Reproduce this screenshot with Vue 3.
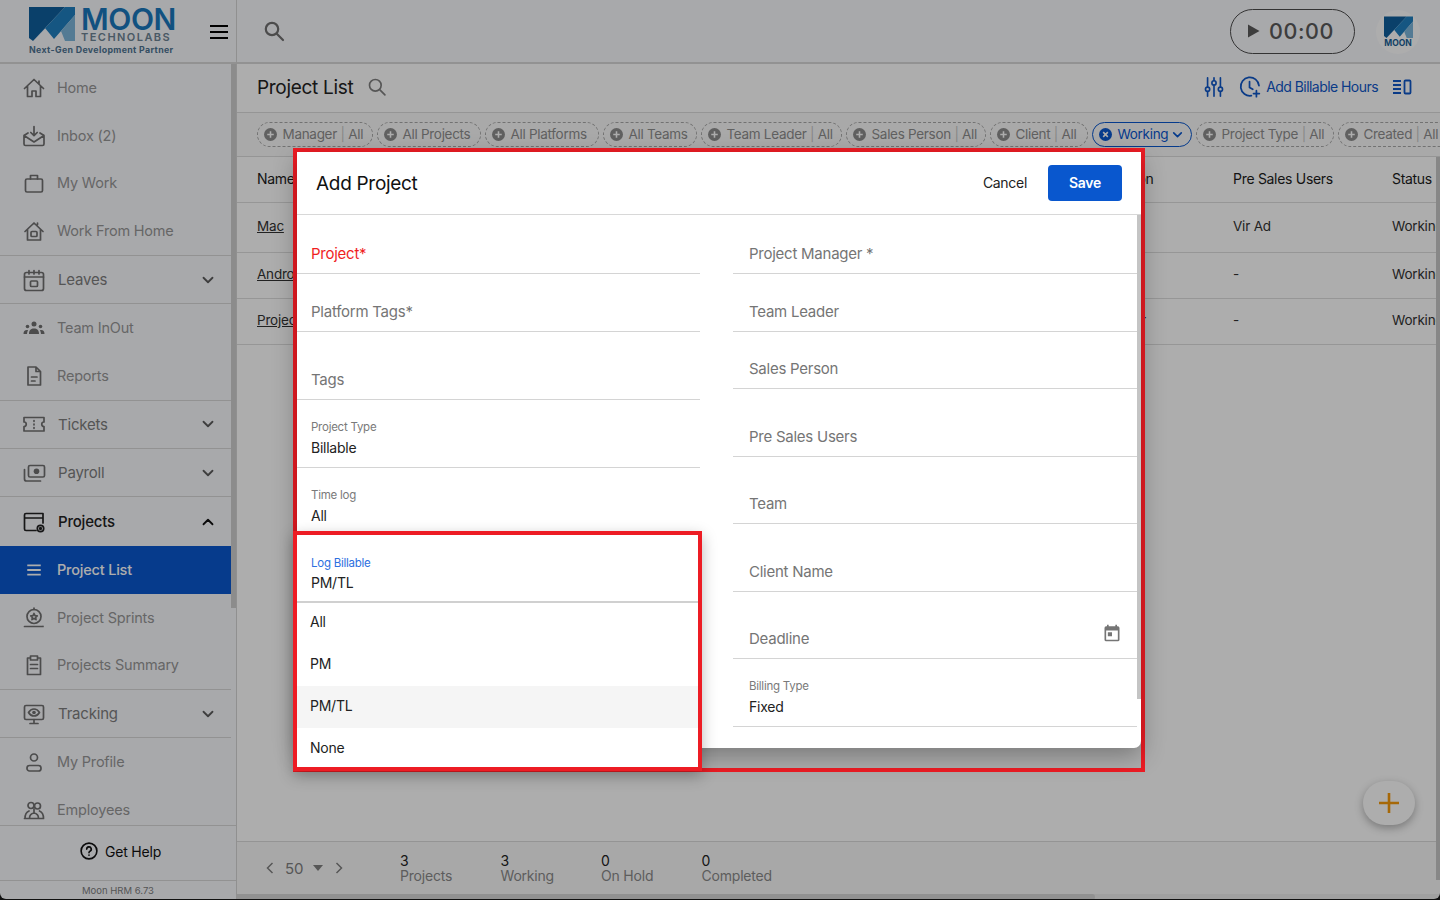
<script setup>
const s = 'fill="none" stroke="currentColor" stroke-width="1.7" stroke-linecap="round" stroke-linejoin="round"'
const icons = {
  home: `<g ${s}><path d="M2.5 12.5 12 3.5l9.5 9M5.5 10v10.5h4.5V15h4v5.5h4.500V10M17 5v3"/></g>`,
  inbox: `<g ${s}><path d="M2 11.5 12 18l10-6.500M2 11.500l4-2.500M22 11.500l-4-2.500M2 11.500V20a1.500 1.500 0 0 0 1.500 1.500h17A1.500 1.500 0 0 0 22 20v-8.500M12 2.500v9M8.800 8.500l3.200 3.200 3.200-3.200"/></g>`,
  work: `<g ${s}><rect x="3.500" y="8" width="17" height="13" rx="1.500"/><path d="M8.500 8V4.500h7V8"/></g>`,
  wfh: `<g ${s}><path d="M3 12.500 12 4l9 8.500M5.500 10.500V21h13V10.500M15.500 5.500V4"/><rect x="9" y="12.500" width="6" height="5" rx="1"/></g>`,
  leaves: `<g ${s}><rect x="2.500" y="4.500" width="19" height="18" rx="2"/><path d="M2.500 9h19M7 2.500V6M12 2.500V6M17 2.500V6"/><rect x="8.500" y="13" width="7" height="5.500" rx="1"/></g>`,
  team: `<g fill="currentColor"><circle cx="12" cy="8" r="2.500"/><circle cx="5.500" cy="10.500" r="1.800"/><circle cx="18.500" cy="10.500" r="1.800"/><path d="M7 18c0-4 2-5.500 5-5.500s5 1.500 5 5.500zM1.500 18c0-2.500 1-4 3.500-4 .7 0 1 .2 1 .2-.6 1-.9 2.300-1 3.800zM22.500 18c0-2.500-1-4-3.500-4-.7 0-1 .2-1 .2.600 1 .9 2.300 1 3.800z"/></g>`,
  reports: `<g ${s}><path d="M6 3h8l4.500 4.500V21H6zM9.500 13h5.500M9.500 17h3.500M14 3v4.500h4.500"/></g>`,
  ticket: `<g ${s}><path d="M2 5.500h20V10a2.200 2.200 0 0 0 0 4.500v4.500H2v-4.500A2.200 2.200 0 0 0 2 10zM12 8.500v.8M12 12v.8M12 15.500v.8"/></g>`,
  payroll: `<g ${s}><rect x="6.500" y="4.500" width="16" height="11.500" rx="1.500"/><path d="M2.500 8.500V18a2 2 0 0 0 2 2h14"/></g><circle cx="14.500" cy="10.200" r="2.800" fill="currentColor"/>`,
  projects: `<g ${s}><path d="M14 20.500H4a1.500 1.500 0 0 1-1.500-1.500V5A1.500 1.500 0 0 1 4 3.500h17V13M2.500 8h18.500"/><circle cx="18.500" cy="18.500" r="3.200"/><circle cx="18.500" cy="18.500" r=".8"/></g>`,
  lines: `<g fill="none" stroke="currentColor" stroke-width="2"><path d="M4.500 6.800h15M4.500 12h15M4.500 17.200h15"/></g>`,
  sprints: `<g ${s}><circle cx="12" cy="10.500" r="7"/><path d="M12 3.500V2M2.500 20.500H21M21 20.500v-.1"/><path d="m12 7.500 1 2.100 2.200.3-1.600 1.500.4 2.200-2-1-2 1 .4-2.200-1.600-1.500 2.200-.3z"/></g>`,
  summary: `<g ${s}><path d="M8.500 5H5.500v16.500h13V5h-3M8.500 3h7v4h-7zM8.500 11.500h7M8.500 15.500h7"/></g>`,
  tracking: `<g ${s}><rect x="2.500" y="3.500" width="19" height="14" rx="1.500"/><path d="M12 17.500v3.500M8 21.500h8M6.500 10.500c1.500-2.500 3.500-3.500 5.500-3.500s4 1 5.500 3.500c-1.500 2.500-3.500 3.500-5.500 3.500s-4-1-5.500-3.500z"/></g><circle cx="12" cy="10.500" r="1.800" fill="currentColor"/>`,
  profile: `<g ${s}><circle cx="12" cy="7.500" r="3.500"/><rect x="5" y="15.500" width="14" height="5.500" rx="2.500"/></g>`,
  employees: `<g ${s}><circle cx="9" cy="7.500" r="3"/><circle cx="15.500" cy="8" r="3"/><path d="M3 20.500c0-4 1.500-6.500 4-7.500M21.500 20.500c0-4-1.500-6.500-4-7.500M2.500 20.500h19M7.500 20.500c0-3 1-5 4.500-5.500 3.500.5 4.500 2.500 4.500 5.500M12 11v4"/></g>`,
}
const nav = [
  { t: 'sub', label: 'Home', icon: 'home' },
  { t: 'sub', label: 'Inbox (2)', icon: 'inbox' },
  { t: 'sub', label: 'My Work', icon: 'work' },
  { t: 'sub', label: 'Work From Home', icon: 'wfh' },
  { t: 'group', label: 'Leaves', icon: 'leaves' },
  { t: 'sub', label: 'Team InOut', icon: 'team' },
  { t: 'sub', label: 'Reports', icon: 'reports' },
  { t: 'group', label: 'Tickets', icon: 'ticket' },
  { t: 'group', label: 'Payroll', icon: 'payroll' },
  { t: 'group open', label: 'Projects', icon: 'projects' },
  { t: 'sub active', label: 'Project List', icon: 'lines' },
  { t: 'sub', label: 'Project Sprints', icon: 'sprints' },
  { t: 'sub', label: 'Projects Summary', icon: 'summary' },
  { t: 'group', label: 'Tracking', icon: 'tracking' },
  { t: 'sub', label: 'My Profile', icon: 'profile' },
  { t: 'sub', label: 'Employees', icon: 'employees' },
]
const chips = [
  { a: 'Manager', b: 'All', w: 116 }, { a: 'All Projects', w: 104 }, { a: 'All Platforms', w: 114 },
  { a: 'All Teams', w: 94 }, { a: 'Team Leader', b: 'All', w: 141 }, { a: 'Sales Person', b: 'All', w: 140 },
  { a: 'Client', b: 'All', w: 98 }, { a: 'Working', w: 100, on: true }, { a: 'Project Type', b: 'All', w: 138 },
  { a: 'Created', b: 'All', w: 130 },
]
const rows = [
  { name: 'Mac', who: '', pre: 'Vir Ad', st: 'Working', h: 50 },
  { name: 'Android', who: '', pre: '-', st: 'Working', h: 46 },
  { name: 'Project', who: 'Sr. Manager', pre: '-', st: 'Working', h: 46 },
]
const leftFields = [
  { ph: 'Project*', h: 59, err: true },
  { ph: 'Platform Tags*', h: 58 },
  { ph: 'Tags', h: 68 },
  { label: 'Project Type', val: 'Billable', h: 68 },
  { label: 'Time log', val: 'All', h: 68 },
]
const rightFields = [
  { ph: 'Project Manager *', h: 59 },
  { ph: 'Team Leader', h: 58 },
  { ph: 'Sales Person', h: 57 },
  { ph: 'Pre Sales Users', h: 68 },
  { ph: 'Team', h: 67 },
  { ph: 'Client Name', h: 68 },
  { ph: 'Deadline', h: 67, cal: true },
  { label: 'Billing Type', val: 'Fixed', h: 68 },
]
const stats = [['3', 'Projects'], ['3', 'Working'], ['0', 'On Hold'], ['0', 'Completed']]
const options = ['All', 'PM', 'PM/TL', 'None']
</script>

<template>
  <div class="page">
    <aside class="side">
      <div class="brand">
        <div class="logo">
          <div class="logo-top">
            <svg class="mark" width="46" height="35" viewBox="0 0 46 35"><polygon points="0,0 36,0 4,34 0,31" fill="#0f5f9c"/><polygon points="36,0 46,0 46,8 25,32 16,21 4,34" fill="#1f7fc0"/><polygon points="46,8 46,34 36,34 32,24" fill="#7cb6da"/></svg>
            <div class="logo-words"><span class="moon">MOON</span><span class="techno">TECHNOLABS</span></div>
          </div>
          <div class="tag">Next-Gen Development Partner</div>
        </div>
        <div class="burger"><i></i><i></i><i></i></div>
      </div>
      <div class="navwrap">
        <nav class="nav">
          <div v-for="n in nav" :key="n.label" class="item" :class="n.t">
            <svg class="ic" width="24" height="24" viewBox="0 0 24 24" v-html="icons[n.icon]"></svg>
            <span class="lbl">{{ n.label }}</span>
            <svg v-if="n.t.includes('group')" class="chev" width="18" height="18" viewBox="0 0 24 24" fill="none" stroke="currentColor" stroke-width="2.400" stroke-linecap="round" stroke-linejoin="round"><path :d="n.t.includes('open') ? 'M6 15l6-6 6 6' : 'M6 9l6 6 6-6'"/></svg>
          </div>
        </nav>
        <div class="navscroll"><div class="navthumb"></div></div>
      </div>
      <div class="help">
        <svg width="18" height="18" viewBox="0 0 24 24" fill="none" stroke="currentColor" stroke-width="2.200" stroke-linecap="round"><circle cx="12" cy="12" r="10.500"/><path d="M9 9.500a3 3 0 1 1 4.300 2.700c-.9.5-1.300 1.100-1.300 2M12 17.400v.1"/></svg>
        <span>Get Help</span>
      </div>
      <div class="ver">Moon HRM 6.73</div>
    </aside>

    <main class="main">
      <header class="top">
        <svg class="topsearch" width="24" height="24" viewBox="0 0 24 24" fill="none" stroke="currentColor" stroke-width="2.200" stroke-linecap="round"><circle cx="10" cy="10" r="6.200"/><path d="m15 15 6 6"/></svg>
        <div class="timer">
          <svg width="14" height="16" viewBox="0 0 14 16"><path d="M1 1.500v13L12.500 8z" fill="currentColor"/></svg>
          <span>00:00</span>
        </div>
        <div class="avatar">
          <svg width="29" height="23" viewBox="0 0 46 35"><polygon points="0,0 36,0 4,34 0,31" fill="#0f5f9c"/><polygon points="36,0 46,0 46,8 25,32 16,21 4,34" fill="#1f7fc0"/><polygon points="46,8 46,34 36,34 32,24" fill="#7cb6da"/></svg>
          <span>MOON</span>
        </div>
      </header>

      <div class="titlebar">
        <h1>Project List</h1>
        <svg width="20" height="20" viewBox="0 0 24 24" fill="none" stroke="#7f7f7f" stroke-width="2" stroke-linecap="round"><circle cx="10" cy="10" r="7"/><path d="m15.500 15.500 6 6"/></svg>
        <div class="actions">
          <svg width="22" height="22" viewBox="0 0 24 24" fill="none" stroke="currentColor" stroke-width="1.800" stroke-linecap="round"><path d="M5 2v10M5 17v5M12 2v3M12 10v12M19 2v10M19 17v5"/><circle cx="5" cy="14.500" r="2.300"/><circle cx="12" cy="7.500" r="2.300"/><circle cx="19" cy="14.500" r="2.300"/></svg>
          <svg class="clk" width="22" height="22" viewBox="0 0 24 24" fill="none" stroke="currentColor" stroke-width="1.900" stroke-linecap="round" stroke-linejoin="round"><path d="M13.500 21.400A10 10 0 1 1 21.800 10.500M11.500 6v6.500l3.500 2M19 16v6.500M15.800 19.200h6.400"/></svg>
          <span class="abh">Add Billable Hours</span>
          <svg class="cols" width="20" height="18" viewBox="0 0 20 18" fill="none" stroke="currentColor" stroke-width="1.800"><path d="M1 3h8M1 7h8M1 11h8M1 15h8"/><rect x="12.500" y="2.500" width="6" height="13" rx="1"/></svg>
        </div>
      </div>

      <div class="chips">
        <div v-for="c in chips" :key="c.a" class="chip" :class="{ on: c.on }" :style="{ flexBasis: c.w + 'px' }">
          <svg width="13" height="13" viewBox="0 0 14 14"><circle cx="7" cy="7" r="7" fill="currentColor"/><path v-if="!c.on" d="M7 3.500v7M3.500 7h7" stroke="#fff" stroke-width="1.700"/><path v-else d="m4.500 4.500 5 5M9.500 4.500l-5 5" stroke="#fff" stroke-width="1.700"/></svg>
          <span class="chiptxt">{{ c.a }}<template v-if="c.b"><em> | </em>{{ c.b }}</template></span>
          <svg v-if="c.on" class="chipchev" width="13" height="13" viewBox="0 0 24 24" fill="none" stroke="currentColor" stroke-width="3" stroke-linecap="round" stroke-linejoin="round"><path d="M5 9l7 7 7-7"/></svg>
        </div>
      </div>

      <div class="table">
        <div class="tr thead"><span>Name</span><span>Sales Person</span><span>Pre Sales Users</span><span>Status</span></div>
        <div v-for="r in rows" :key="r.name" class="tr body" :style="{ height: r.h + 'px' }">
          <span><a>{{ r.name }}</a></span><span>{{ r.who }}</span><span>{{ r.pre }}</span><span>{{ r.st }}</span>
        </div>
      </div>

      <div class="grow"><button class="fab"><svg width="22" height="22" viewBox="0 0 22 22"><path d="M11 1v20M1 11h20" stroke="currentColor" stroke-width="2.600"/></svg></button></div>

      <footer class="foot">
        <div class="pager">
          <svg width="12" height="14" viewBox="0 0 12 14" fill="none" stroke="currentColor" stroke-width="1.500"><path d="M8.500 2 3.500 7l5 5"/></svg>
          <span class="num">50</span>
          <svg width="10" height="6" viewBox="0 0 10 6"><path d="M0 0h10L5 6z" fill="currentColor"/></svg>
          <svg class="nx" width="12" height="14" viewBox="0 0 12 14" fill="none" stroke="currentColor" stroke-width="1.500"><path d="m3.500 2 5 5-5 5"/></svg>
        </div>
        <div class="stats">
          <div v-for="st in stats" :key="st[1]" class="stat"><b>{{ st[0] }}</b><span>{{ st[1] }}</span></div>
        </div>
      </footer>
      <div class="hscroll"><div class="hthumb"></div></div>
    </main>

    <div class="vthumb"></div>
    <div class="scrim"></div>

    <section class="frame">
      <div class="modal">
        <div class="mhead">
          <h2>Add Project</h2>
          <span class="cancel">Cancel</span>
          <button class="save">Save</button>
        </div>
        <div class="form">
          <div class="col left">
            <div v-for="f in leftFields" :key="f.ph || f.label" class="field" :style="{ height: f.h + 'px' }">
              <span v-if="f.ph" class="ph" :class="{ err: f.err }">{{ f.ph }}</span>
              <template v-else><span class="small">{{ f.label }}</span><span class="val">{{ f.val }}</span></template>
            </div>
          </div>
          <div class="col right">
            <div v-for="f in rightFields" :key="f.ph || f.label" class="field" :style="{ height: f.h + 'px' }">
              <span v-if="f.ph" class="ph">{{ f.ph }}</span>
              <template v-else><span class="small">{{ f.label }}</span><span class="val">{{ f.val }}</span></template>
              <svg v-if="f.cal" class="cal" width="20" height="20" viewBox="0 0 24 24"><path d="M19 4h-1V2h-2v2H8V2H6v2H5a2 2 0 0 0-2 2v14a2 2 0 0 0 2 2h14a2 2 0 0 0 2-2V6a2 2 0 0 0-2-2zm0 16H5V9h14zM7 11h5v5H7z" fill="#757575"/></svg>
            </div>
          </div>
          <div class="mscroll"><div class="mthumb"></div></div>
        </div>
      </div>
    </section>

    <section class="ddframe">
      <div class="field dd">
        <span class="small blue">Log Billable</span><span class="val">PM/TL</span>
      </div>
      <ul class="menu">
        <li v-for="o in options" :key="o" :class="{ hl: o === 'PM/TL' }">{{ o }}</li>
      </ul>
    </section>

    <div class="edge"></div>
  </div>
</template>

<style>
html, body { margin: 0; background: #fff; }
</style>

<style scoped>
* { box-sizing: border-box; }
.page { position: relative; width: 1440px; height: 900px; overflow: hidden; display: flex; font-family: Inter, "Noto Sans", sans-serif; font-size: 14.500px; letter-spacing: -.2px; color: #262626; background: #fff; }

.side { width: 237px; height: 900px; flex: none; display: flex; flex-direction: column; background: #f8f9fd; border-right: 1px solid #d4d4d4; }
.brand { height: 64px; flex: none; display: flex; align-items: flex-start; padding: 7px 8px 0 29px; border-bottom: 2px solid #d8d8d8; }
.logo { width: 146px; flex: none; }
.logo-top { display: flex; gap: 6px; height: 37px; }
.mark { flex: none; }
.logo-words { display: flex; flex-direction: column; flex: none; }
.moon { font-size: 30px; line-height: 24px; font-weight: 600; letter-spacing: -.4px; color: #1a78bd; height: 24px; }
.techno { font-size: 11px; line-height: 13px; font-weight: 600; letter-spacing: 1.450px; color: #6d8394; margin-top: 0; }
.tag { font-size: 8.800px; font-weight: 700; line-height: 12px; letter-spacing: .35px; white-space: nowrap; color: #4d7391; }
.burger { margin: 18px 0 0 35px; width: 18px; display: flex; flex-direction: column; gap: 4px; }
.burger i { display: block; height: 2px; background: #000; }

.navwrap { flex: 1; min-height: 0; display: flex; overflow: hidden; }
.nav { width: 231px; flex: none; }
.item { display: flex; align-items: center; padding-left: 22px; height: 47.800px; color: #979797; }
.item.group { height: 48.600px; color: #7e7e7e; border-bottom: 1px solid #d8d8d8; }
.item.sub + .item.group { height: 49px; border-top: 1px solid #d8d8d8; }
.item.group.open { color: #222; border-bottom: 0; }
.item.group.open .lbl { font-weight: 500; }
.item.active { background: #0957ce; color: #fff; font-weight: 500; }
.ic { flex: none; color: #707070; }
.item.open .ic { color: #222; }
.item.active .ic { color: #fff; transform: scale(.9); }
.lbl { margin-left: 11px; padding-bottom: 1px; white-space: nowrap; font-size: 14.500px; }
.group .lbl { margin-left: 12px; padding-bottom: 0; font-size: 15px; }
.chev { margin-left: auto; margin-right: 14px; color: #5c5c5c; }
.item.open .chev { color: #111; }
.navscroll { width: 5px; flex: none; }
.navthumb { height: 544px; background: #cfcfcf; }

.help { height: 56px; flex: none; display: flex; align-items: center; justify-content: center; gap: 7px; padding: 0 0 4px 5px; border-top: 1px solid #d8d8d8; border-bottom: 1px solid #d8d8d8; font-size: 14px; color: #111; }
.ver { height: 19px; flex: none; text-align: center; font-size: 9.500px; line-height: 19px; color: #7d7d7d; letter-spacing: 0; }

.main { flex: 1; min-width: 0; height: 900px; display: flex; flex-direction: column; }
.top { height: 64px; flex: none; display: flex; align-items: center; padding: 0 20px 0 25px; background: #f8f9fd; border-bottom: 2px solid #d8d8d8; color: #707070; }
.topsearch { margin-right: auto; }
.timer { width: 125px; height: 45px; display: flex; align-items: center; gap: 8px; padding-left: 16px; border: 1.500px solid #4c4c4c; border-radius: 23px; color: #5a5a5a; }
.timer span { font-size: 21.500px; letter-spacing: .6px; font-weight: 500; }
.avatar { width: 44px; height: 44px; margin: 2px 0 0 21px; border-radius: 50%; background: #fff; display: flex; flex-direction: column; align-items: center; justify-content: center; color: #1a5f96; }
.avatar span { font-size: 8.500px; line-height: 9px; font-weight: 700; letter-spacing: 0; }

.titlebar { height: 49px; flex: none; display: flex; align-items: center; padding: 0 28px 2px 20px; border-bottom: 1px solid #dcdcdc; background: #fff; }
h1 { margin: 0 14px 0 0; font-size: 19px; font-weight: 400; color: #222; letter-spacing: -.3px; }
.actions { margin-left: auto; display: flex; align-items: center; color: #0f57c8; }
.clk { margin-left: 14px; }
.abh { margin: 0 0 2px 5px; font-size: 14px; letter-spacing: -.55px; }
.cols { margin-left: 14px; }

.chips { height: 44px; flex: none; display: flex; align-items: center; gap: 4px; padding-left: 20px; overflow: hidden; border-bottom: 1px solid #dcdcdc; background: #fafafa; }
.chip { flex: 0 0 auto; height: 25px; display: flex; align-items: center; padding-left: 6px; border: 1px dashed #a8a8a8; border-radius: 13px; color: #8e8e8e; white-space: nowrap; font-size: 13.500px; }
.chip.on { border: 1px solid #0957ce; color: #0957ce; }
.chiptxt { margin-left: 5.500px; padding-bottom: 1px; letter-spacing: -.3px; }
.chiptxt em { font-style: normal; color: #c8c8c8; }
.chipchev { margin-left: 3px; }

.table { flex: none; }
.tr { display: grid; grid-template-columns: 814px 162px 159px 1fr; align-items: center; padding: 0 0 2px 20px; height: 46px; border-bottom: 1px solid #dedede; font-size: 13.500px; color: #333; white-space: nowrap; overflow: hidden; }
.tr.body { padding-bottom: 4px; }
.thead { height: 46px; color: #1c1c1c; font-size: 14px; letter-spacing: -.3px; background: #fff; }
.tr a { text-decoration: underline; }

.grow { flex: 1; min-height: 0; position: relative; }
.fab { position: absolute; right: 25px; top: 436px; width: 52px; height: 44px; padding: 0; border: 0; border-radius: 22px; background: #fff; color: #f59a0c; box-shadow: 0 3px 8px rgba(0,0,0,.3); display: flex; align-items: center; justify-content: center; }

.foot { height: 53px; flex: none; display: flex; align-items: center; padding-left: 27px; border-top: 1px solid #dadada; background: #f8f8f8; }
.pager { width: 136px; display: flex; align-items: center; color: #808080; }
.num { margin: 0 10px 0 9px; font-size: 15px; }
.nx { margin-left: 10px; }
.stats { display: flex; }
.stat { width: 100.500px; display: flex; flex-direction: column; font-size: 14px; line-height: 15px; color: #8a8a8a; }
.stat b { font-weight: 400; color: #222; }
.hscroll { height: 6px; flex: none; background: #ececec; }
.hthumb { width: 858px; height: 6px; background: #d6d6d6; border-radius: 0 3px 3px 0; }

.vthumb { position: absolute; right: 0; top: 157px; width: 4px; height: 723px; background: #c8c8c8; }
.scrim { position: absolute; inset: 0; background: rgba(0,0,0,.32); }

.frame { position: absolute; left: 293px; top: 148px; width: 852px; height: 624px; border: 4px solid #ed1c24; }
.modal { height: 596px; background: #fff; border-radius: 0 0 7px 7px; overflow: hidden; display: flex; flex-direction: column; box-shadow: 0 8px 24px rgba(0,0,0,.3); }
.mhead { height: 63px; flex: none; display: flex; align-items: center; padding: 0 19px; border-bottom: 1px solid #d8d8d8; }
h2 { margin: 0 auto 0 0; font-size: 19px; font-weight: 400; color: #111; letter-spacing: -.3px; }
.cancel { font-size: 14px; color: #222; margin: 0 21px 2px 0; letter-spacing: -.3px; }
.save { width: 74px; height: 36px; border: 0; padding: 0 0 2px; border-radius: 4px; background: #0957ce; color: #fff; font: 600 14px Inter, sans-serif; letter-spacing: -.3px; }
.form { flex: 1; min-height: 0; display: flex; }
.col.left { width: 403px; flex: none; }
.col.right { width: 404px; flex: none; margin-left: 33px; }
.left .field { padding-left: 14px; }
.right .field { padding-left: 16px; }
.field { position: relative; display: flex; flex-direction: column; justify-content: flex-end; padding-bottom: 9px; border-bottom: 1px solid #d4d4d4; }
.ph { font-size: 15px; line-height: 22px; margin-bottom: -1px; letter-spacing: -.25px; color: #757575; }
.ph.err { color: #f01f1f; }
.small { font-size: 11.500px; line-height: 15px; letter-spacing: -.25px; color: #7a7a7a; margin-bottom: 3px; }
.small.blue { color: #2d6fe0; }
.val { font-size: 14px; line-height: 20px; letter-spacing: -.25px; color: #222; }
.cal { position: absolute; right: 15px; top: 31px; }
.mscroll { width: 4px; flex: none; }
.mthumb { height: 484px; background: #c4c4c4; }

.ddframe { position: absolute; left: 293px; top: 531px; width: 409px; height: 240px; border: 4px solid #ed1c24; background: #fff; box-shadow: 0 5px 14px rgba(0,0,0,.28); }
.dd { height: 68px; padding-left: 14px; border-bottom: 2px solid #d0d0d0; padding-bottom: 8px; }
.dd .small { margin-bottom: 2.500px; }
.menu { list-style: none; margin: -1px 0 0; padding: 0; }
.menu li { height: 42px; line-height: 40px; padding-left: 13px; font-size: 14px; letter-spacing: -.25px; color: #222; }
.menu li.hl { background: #f5f5f5; }

.edge { position: absolute; left: 0; right: 0; top: -20px; bottom: 1px; border-radius: 0 0 6px 6px; box-shadow: 0 0 0 20px #111; pointer-events: none; }
</style>
